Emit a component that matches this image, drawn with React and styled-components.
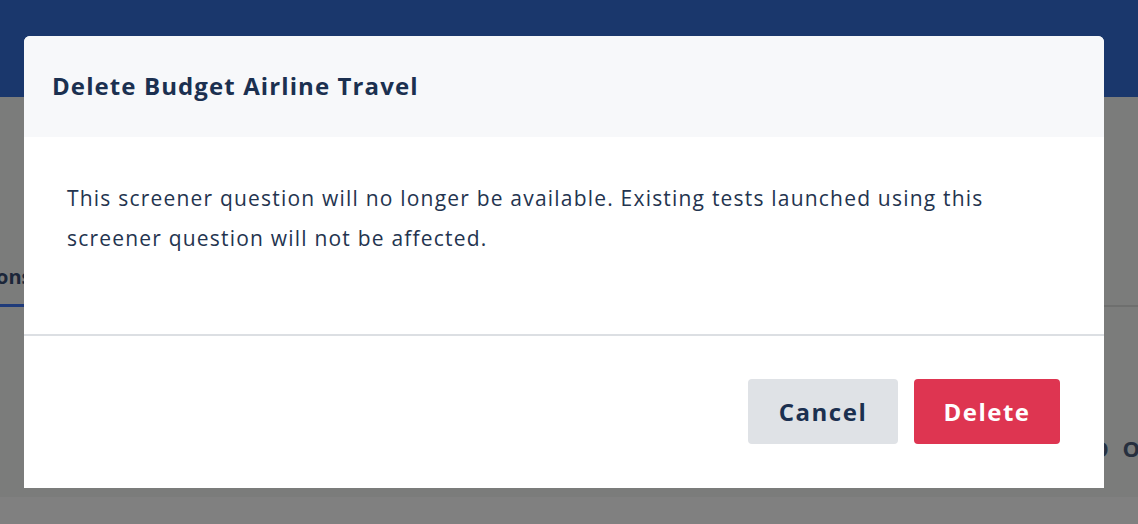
import React from "react";
import styled, { createGlobalStyle } from "styled-components";

const Global = createGlobalStyle`
  html, body {
    margin: 0;
    padding: 0;
    height: 100%;
    overflow: hidden;
    font-family: "Open Sans", Lato, Arial, sans-serif;
  }
`;

// -- page behind the dialog
const Page = styled.div`
  width: 1138px;
  height: 524px;
  display: flex;
  flex-direction: column;
  background: #7b7c7b;
`;

const TopBar = styled.div`
  height: 97px;
  background: #1a376c;
`;

const Content = styled.div`
  flex: 1;
  display: flex;
  flex-direction: column;
  padding-top: 158px;
`;

const TabBar = styled.div`
  display: flex;
  align-items: flex-end;
  height: 50px;
  border-bottom: 2px solid #6e6f6e;
`;

const Tab = styled.div`
  margin-left: -4px;
  padding: 0 4px 14px 0;
  font-size: 20px;
  font-weight: 700;
  color: #1b2639;
  border-bottom: 3px solid #1f3b7a;
  margin-bottom: -2px;
`;

const Row = styled.div`
  display: flex;
  justify-content: flex-end;
  margin-top: 126px;
  margin-right: -6px;
  font-size: 22px;
  font-weight: 700;
  color: #27303f;
  letter-spacing: 4px;
  overflow: hidden;
`;

const BottomStrip = styled.div`
  margin-top: auto;
  height: 27px;
  background: #808080;
`;

// -- dialog
const Dialog = styled.div`
  position: absolute;
  left: 24px;
  top: 36px;
  width: 1080px;
  height: 452px;
  display: flex;
  flex-direction: column;
  background: #fff;
  border-radius: 6px 6px 0 0;
  overflow: hidden;
  color: #1b3050;
`;

const Header = styled.div`
  height: 101px;
  box-sizing: border-box;
  display: flex;
  align-items: center;
  padding: 0 28px 3px;
  background: #f7f8fa;
`;

const Title = styled.h2`
  margin: 0;
  font-size: 24px;
  font-weight: 700;
  letter-spacing: 1.1px;
`;

const Body = styled.p`
  margin: 0;
  padding: 41px 60px 76px 43px;
  font-size: 21px;
  line-height: 40px;
  letter-spacing: 1.2px;
  color: #24344f;
`;

const Footer = styled.div`
  flex: 1;
  display: flex;
  justify-content: flex-end;
  align-items: flex-start;
  gap: 16px;
  padding: 43px 44px 0 0;
  border-top: 2px solid #dcdfe3;
`;

const Button = styled.button`
  height: 65px;
  width: ${(p) => (p.danger ? "146px" : "150px")};
  padding: 0;
  border: none;
  border-radius: 4px;
  font-family: inherit;
  font-size: 24px;
  font-weight: 700;
  letter-spacing: 1.5px;
  background: ${(p) => (p.danger ? "#de3551" : "#dfe2e6")};
  color: ${(p) => (p.danger ? "#fff" : "#1b3050")};
  cursor: pointer;
`;

function App() {
  return (
    <>
      <Global />
      <Page>
        <TopBar />
        <Content>
          <TabBar>
            <Tab>ons</Tab>
          </TabBar>
          <Row>DO O</Row>
          <BottomStrip />
        </Content>
      </Page>
      <Dialog>
        <Header>
          <Title>Delete Budget Airline Travel</Title>
        </Header>
        <Body>
          This screener question will no longer be available. Existing tests
          launched using this screener question will not be affected.
        </Body>
        <Footer>
          <Button>Cancel</Button>
          <Button danger>Delete</Button>
        </Footer>
      </Dialog>
    </>
  );
}

export default App;
